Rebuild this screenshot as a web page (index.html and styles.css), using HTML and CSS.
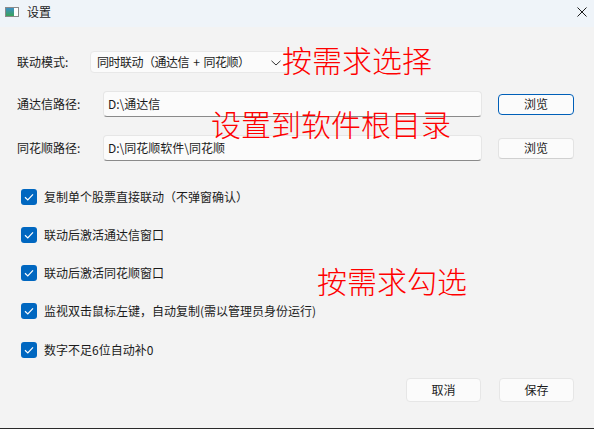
FILE: index.html
```html
<!DOCTYPE html>
<html lang="zh-CN">
<head>
<meta charset="utf-8">
<title>设置</title>
<link rel="stylesheet" href="styles.css">
</head>
<body>
<div class="window">
  <div class="titlebar">
    <svg class="app-icon" width="14" height="10" viewBox="0 0 14 10">
      <rect x="0.5" y="0.5" width="13" height="9" fill="#f4f4f4" stroke="#8a8a8a"/>
      <defs>
        <linearGradient id="g" x1="0" y1="0" x2="0" y2="1">
          <stop offset="0" stop-color="#3d8fc4"/>
          <stop offset="1" stop-color="#3aa35a"/>
        </linearGradient>
      </defs>
      <rect x="1" y="1" width="8" height="8" fill="url(#g)"/>
      <rect x="9" y="1" width="4" height="8" fill="#ffffff"/>
    </svg>
    <span class="title">设置</span>
    <svg class="close" width="10" height="10" viewBox="0 0 10 10">
      <path d="M0.5 0.5 L9.5 9.5 M9.5 0.5 L0.5 9.5" stroke="#1b1b1b" stroke-width="1"/>
    </svg>
  </div>

  <div class="content">
    <div class="row row-mode">
      <span class="label label-mode">联动模式:</span>
      <div class="combo">
        <span class="combo-text">同时联动（通达信 + 同花顺）</span>
        <svg class="chevron" width="10" height="6" viewBox="0 0 10 6">
          <path d="M0.5 0.8 L5 5 L9.5 0.8" fill="none" stroke="#333" stroke-width="1"/>
        </svg>
      </div>
    </div>

    <div class="row row-path">
      <span class="label label-path">通达信路径:</span>
      <div class="input">D:\通达信</div>
      <div class="btn btn-focus">浏览</div>
    </div>

    <div class="row row-path row-path2">
      <span class="label label-path">同花顺路径:</span>
      <div class="input">D:\同花顺软件\同花顺</div>
      <div class="btn">浏览</div>
    </div>

    <div class="checks">
      <div class="check-row"><span class="box"><svg width="16" height="16" viewBox="0 0 16 16"><path d="M4 8.3 L6.8 11 L12 5.4" fill="none" stroke="#fff" stroke-width="1.2"/></svg></span><span class="check-label">复制单个股票直接联动（不弹窗确认）</span></div>
      <div class="check-row"><span class="box"><svg width="16" height="16" viewBox="0 0 16 16"><path d="M4 8.3 L6.8 11 L12 5.4" fill="none" stroke="#fff" stroke-width="1.2"/></svg></span><span class="check-label">联动后激活通达信窗口</span></div>
      <div class="check-row"><span class="box"><svg width="16" height="16" viewBox="0 0 16 16"><path d="M4 8.3 L6.8 11 L12 5.4" fill="none" stroke="#fff" stroke-width="1.2"/></svg></span><span class="check-label">联动后激活同花顺窗口</span></div>
      <div class="check-row"><span class="box"><svg width="16" height="16" viewBox="0 0 16 16"><path d="M4 8.3 L6.8 11 L12 5.4" fill="none" stroke="#fff" stroke-width="1.2"/></svg></span><span class="check-label">监视双击鼠标左键，自动复制(需以管理员身份运行)</span></div>
      <div class="check-row"><span class="box"><svg width="16" height="16" viewBox="0 0 16 16"><path d="M4 8.3 L6.8 11 L12 5.4" fill="none" stroke="#fff" stroke-width="1.2"/></svg></span><span class="check-label">数字不足6位自动补0</span></div>
    </div>

    <div class="actions">
      <div class="btn btn-action">取消</div>
      <div class="btn btn-action">保存</div>
    </div>

    <div class="note note-1">按需求选择</div>
    <div class="note note-2">设置到软件根目录</div>
    <div class="note note-3">按需求勾选</div>
  </div>
</div>
</body>
</html>
```

FILE: styles.css
```css
* { box-sizing: border-box; }
html, body {
  margin: 0;
  padding: 0;
}
body {
  width: 594px;
  height: 429px;
  background: #2a2a2a;
  font-family: "Noto Sans CJK SC", "Noto Sans", sans-serif;
  font-size: 12px;
  color: #1b1b1b;
  overflow: hidden;
}
.window {
  width: 594px;
  height: 428px;
  background: #f3f3f3;
  display: flex;
  flex-direction: column;
}
.titlebar {
  height: 27px;
  background: #eff4f9;
  display: flex;
  align-items: center;
  padding-left: 5px;
  padding-right: 7px;
  flex-shrink: 0;
}
.app-icon { display: block; margin-top: -3px; }
.title {
  margin-left: 8px;
  font-size: 12px;
  line-height: 16px;
  margin-top: -3px;
}
.close { margin-left: auto; display: block; margin-top: -3px; }

.content {
  position: relative;
  flex: 1;
  padding-left: 17px;
  padding-right: 20px;
}
.row {
  display: flex;
  align-items: center;
}
.row-mode {
  margin-top: 24px;
  height: 22px;
}
.label { line-height: 16px; white-space: nowrap; }
.label-mode { width: 73px; }
.label-path { width: 86px; }
.combo {
  width: 200px;
  height: 22px;
  background: #fbfbfb;
  border: 1px solid #e8e8e8;
  border-radius: 4px;
  display: flex;
  align-items: center;
  padding-left: 6px;
  padding-right: 8px;
}
.combo-text {
  line-height: 16px;
  white-space: nowrap;
  word-spacing: 2px;
  letter-spacing: -0.5px;
}
.chevron { margin-left: auto; display: block; margin-top: 1px; }

.row-path {
  margin-top: 18px;
  height: 26px;
}
.input {
  width: 379px;
  height: 26px;
  background: #fbfbfb;
  border: 1px solid #e6e6e6;
  border-bottom: 1px solid #8a8a8a;
  border-radius: 4px;
  padding-left: 4px;
  display: flex;
  align-items: center;
  line-height: 16px;
}
.btn {
  height: 21px;
  width: 76px;
  margin-left: 16px;
  background: #fbfbfb;
  border: 1px solid #e3e3e3;
  border-bottom-color: #d0d0d0;
  border-radius: 4px;
  display: flex;
  align-items: center;
  justify-content: center;
  line-height: 16px;
}
.btn-focus {
  border: 1px solid #005fb8;
}

.checks {
  margin-top: 28px;
  padding-left: 4px;
  display: flex;
  flex-direction: column;
  gap: 22px;
}
.check-row {
  display: flex;
  align-items: center;
  height: 16px;
}
.check-row:nth-child(5) { margin-top: 1px; }
.box {
  width: 16px;
  height: 16px;
  border-radius: 3px;
  background: #0067c0;
  display: block;
  flex-shrink: 0;
}
.box svg { display: block; }
.check-label {
  margin-left: 7px;
  line-height: 16px;
  white-space: nowrap;
}

.actions {
  margin-top: 20px;
  display: flex;
  justify-content: flex-end;
  gap: 18px;
}
.btn-action {
  width: 75px;
  height: 24px;
  margin-left: 0;
  border-color: #e6e6e6;
}

.note {
  position: absolute;
  color: #ff0000;
  font-size: 30px;
  line-height: 30px;
  white-space: nowrap;
  font-weight: 300;
}
.note-1 { left: 282px; top: 17px; }
.note-2 { left: 211px; top: 81px; }
.note-3 { left: 317px; top: 238px; }
```
